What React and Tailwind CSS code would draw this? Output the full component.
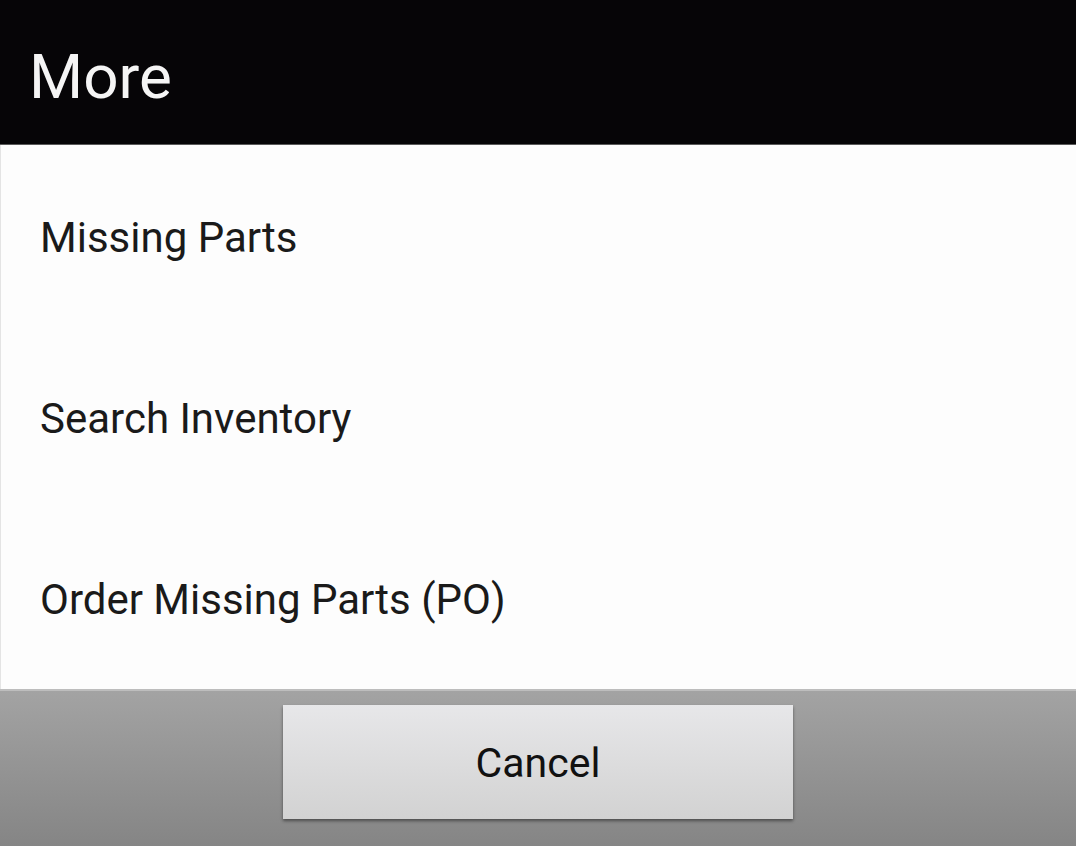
export default function App() {
  const items = ["Missing Parts", "Search Inventory", "Order Missing Parts (PO)"];
  return (
    <div className="w-[1076px] h-[846px] flex flex-col bg-white overflow-hidden" style={{ fontFamily: "Roboto, 'Liberation Sans', sans-serif" }}>
      <div className="h-[145px] shrink-0 bg-[#060507] flex items-center pl-[29px] border-b border-[#5a5a5a]">
        <span className="text-[62px] leading-none text-[#f5f5f5] pt-[10px]">More</span>
      </div>
      <div className="flex-1 flex flex-col bg-[#fdfdfd] border-l border-[#e4e4e4]">
        {items.map((t) => (
          <div key={t} className="flex-1 flex items-center pl-[39px] pt-[4px]">
            <span className="text-[42px] leading-none text-[#1a1a1a]">{t}</span>
          </div>
        ))}
      </div>
      <div className="h-[157px] shrink-0 bg-gradient-to-b from-[#a3a3a3] to-[#858585] border-t-2 border-[#bdbdbd] flex justify-center pt-[14px]">
        <div className="w-[510px] h-[114px] bg-gradient-to-b from-[#e7e7e9] to-[#d2d2d2] shadow-[0_2px_3px_rgba(0,0,0,0.45)] flex items-center justify-center">
          <span className="text-[41px] leading-none text-[#111] pt-[2px]">Cancel</span>
        </div>
      </div>
    </div>
  );
}
